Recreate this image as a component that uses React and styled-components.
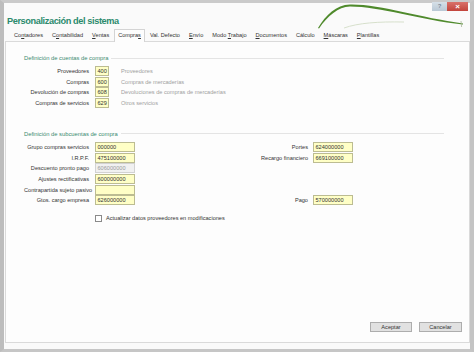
import React from 'react'
import styled, { createGlobalStyle } from 'styled-components'

const tabs = [
    { text: 'Contadores', key: 2 },
    { text: 'Contabilidad', key: 1 },
    { text: 'Ventas', key: 0 },
    { text: 'Compras', key: 6, active: true },
    { text: 'Val. Defecto', key: -1 },
    { text: 'Envío', key: 0 },
    { text: 'Modo Trabajo', key: 5 },
    { text: 'Documentos', key: 0 },
    { text: 'Cálculo', key: -1 },
    { text: 'Máscaras', key: 0 },
    { text: 'Plantillas', key: 0 },
]

const cuentas = [
    { label: 'Proveedores', value: '400', desc: 'Proveedores' },
    { label: 'Compras', value: '600', desc: 'Compras de mercaderías' },
    { label: 'Devolución de compras', value: '608', desc: 'Devoluciones de compras de mercaderías' },
    { label: 'Compras de servicios', value: '629', desc: 'Otros servicios' },
]

const subcuentas = [
    { left: ['Grupo compras servicios', '000000'], right: ['Portes', '624000000'] },
    { left: ['I.R.P.F.', '475100000'], right: ['Recargo financiero', '669100000'] },
    { left: ['Descuento pronto pago', '606000000'], disabled: true },
    { left: ['Ajustes rectificativas', '600000000'] },
    { left: ['Contrapartida sujeto pasivo', ''] },
    { left: ['Gtos. cargo empresa', '626000000'], right: ['Pago', '570000000'] },
]

const TabLabel = ({ text, key: k }) => {
    if (k < 0) return text
    return (
        <>
            {text.slice(0, k)}
            <u>{text[k]}</u>
            {text.slice(k + 1)}
        </>
    )
}

const App = () => {
    return (
        <>
            <GlobalStyle />
            <Window>
                <Header>
                    <Title>Personalización del sistema</Title>
                    <Swoosh viewBox="0 0 170 30" width="170" height="30">
                        <path d="M44,25 C58,20 78,18.5 104,19" fill="none" stroke="#d3dcc6" strokeWidth="0.9" />
                        <path
                            d="M18,25 C26,12 36,2 50,1.6 C80,1 120,15 163,20.4 L163,21.6 C120,17 80,3.6 50,3.6 C38,4 28,13 19,25.4 Z"
                            fill="#4f8a2c"
                        />
                        <path d="M161,18 L161.6,24" stroke="#a9b69b" strokeWidth="0.8" />
                    </Swoosh>
                </Header>
                <Controls>
                    <HelpButton>?</HelpButton>
                    <CloseButton>×</CloseButton>
                </Controls>
                <TabBar>
                    {tabs.map((t) => (
                        <Tab key={t.text} $active={t.active}>
                            {TabLabel({ text: t.text, key: t.key })}
                        </Tab>
                    ))}
                </TabBar>
                <Panel>
                    <Section>
                        <Legend $top={12.5}>
                            <span>Definición de cuentas de compra</span>
                            <Rule />
                        </Legend>
                        <Rows>
                            {cuentas.map((c) => (
                                <Row key={c.label}>
                                    <Label $width={65}>{c.label}</Label>
                                    <Field $width={14}>{c.value}</Field>
                                    <Desc>{c.desc}</Desc>
                                </Row>
                            ))}
                        </Rows>
                    </Section>
                    <Section>
                        <Legend $top={22.4}>
                            <span>Definición de subcuentas de compra</span>
                            <Rule />
                        </Legend>
                        <Grid>
                            {subcuentas.map((r, i) => (
                                <React.Fragment key={i}>
                                    <GridLabel>{r.left[0]}</GridLabel>
                                    <Field $width={40} $disabled={r.disabled}>{r.left[1]}</Field>
                                    <GridLabel $pad={5}>{r.right ? r.right[0] : ''}</GridLabel>
                                    {r.right ? <Field $width={40}>{r.right[1]}</Field> : <span />}
                                </React.Fragment>
                            ))}
                        </Grid>
                        <CheckRow>
                            <Check />
                            <CheckText>Actualizar datos proveedores en modificaciones</CheckText>
                        </CheckRow>
                    </Section>
                    <Buttons>
                        <Button $width={42}>Aceptar</Button>
                        <Button $width={43}>Cancelar</Button>
                    </Buttons>
                </Panel>
            </Window>
        </>
    )
}

export default App

const GlobalStyle = createGlobalStyle`
    html, body {
        margin: 0;
        padding: 0;
        background: #ffffff;
    }
    body {
        font-family: "Liberation Sans", Arial, sans-serif;
        color: #333;
    }
`

const Window = styled.div`
    position: relative;
    box-sizing: border-box;
    width: 474px;
    height: 352px;
    display: flex;
    flex-direction: column;
    background: #fafafa;
    border-top: 3px solid #cacaca;
    border-left: 4px solid #bdbdbd;
    border-right: 4px solid #c4c4c4;
    border-bottom: 3px solid #c6c6c6;
`

const Header = styled.div`
    position: relative;
    height: 26px;
    padding-left: 3px;
`

const Title = styled.div`
    margin-top: 13px;
    font-size: 9.2px;
    line-height: 11px;
    font-weight: bold;
    letter-spacing: -0.4px;
    color: #2b8a6d;
`

const Swoosh = styled.svg`
    position: absolute;
    left: 296px;
    top: 0;
`

const Controls = styled.div`
    position: absolute;
    top: -1px;
    right: 2px;
    display: flex;
    height: 9px;
`

const HelpButton = styled.div`
    width: 15px;
    height: 9px;
    background: linear-gradient(#d6e0e8, #b9c8d5);
    color: #7a8c9b;
    font-size: 6px;
    line-height: 9px;
    text-align: center;
    font-weight: bold;
`

const CloseButton = styled.div`
    width: 21px;
    height: 9px;
    background: linear-gradient(#d9716a, #c2443b);
    color: #fff;
    font-size: 8px;
    line-height: 9px;
    text-align: center;
    font-weight: bold;
`

const TabBar = styled.div`
    display: flex;
    align-items: flex-end;
    height: 12px;
    padding-left: 5.5px;
`

const Tab = styled.div`
    box-sizing: border-box;
    height: ${(p) => (p.$active ? '13px' : '11px')};
    padding: 0 ${(p) => (p.$active ? '3.5px' : '4.5px')};
    line-height: 11px;
    font-size: 5.6px;
    color: #333;
    white-space: nowrap;
    position: relative;
    z-index: 1;
    margin-bottom: ${(p) => (p.$active ? '-1px' : '0')};
    background: ${(p) => (p.$active ? '#fdfdfd' : 'transparent')};
    border: ${(p) => (p.$active ? '1px solid #d4d4d4' : 'none')};
    border-bottom: none;

    u {
        text-decoration-thickness: 0.5px;
    }
`

const Panel = styled.div`
    flex: 1;
    display: flex;
    flex-direction: column;
    margin: 0 0 6px 1px;
    background: #fdfdfd;
    border: 1px solid #dadada;
`

const Section = styled.div`
    margin: 0 25px 0 18px;
`

const Legend = styled.div`
    display: flex;
    align-items: center;
    gap: 3px;
    height: 7px;
    margin-top: ${(p) => p.$top}px;
    font-size: 5.8px;
    color: #3a8a70;
    white-space: nowrap;
`

const Rule = styled.div`
    flex: 1;
    height: 1px;
    background: #e4e4e4;
`

const Rows = styled.div`
    display: flex;
    flex-direction: column;
    gap: 0.7px;
    margin-top: 4.5px;
`

const Row = styled.div`
    display: flex;
    align-items: center;
    height: 10px;
`

const Label = styled.div`
    width: ${(p) => p.$width}px;
    margin-right: 6px;
    text-align: right;
    font-size: 5.6px;
    color: #333;
    white-space: nowrap;
`

const Field = styled.div`
    box-sizing: border-box;
    width: ${(p) => p.$width}px;
    height: 10px;
    padding-left: 1.5px;
    line-height: 8px;
    font-size: 5.6px;
    white-space: nowrap;
    overflow: hidden;
    background: ${(p) => (p.$disabled ? '#f1f1f1' : '#ffffc6')};
    border: 1px solid ${(p) => (p.$disabled ? '#d2d2d2' : '#bcbc92')};
    color: ${(p) => (p.$disabled ? '#9a9a9a' : '#333')};
`

const Desc = styled.div`
    margin-left: 12px;
    font-size: 5.6px;
    color: #a0a0a0;
    white-space: nowrap;
`

const Grid = styled.div`
    display: grid;
    grid-template-columns: 71px 40px 178px 40px;
    grid-auto-rows: 10px;
    row-gap: 0.7px;
    align-items: center;
    margin-top: 4.5px;
`

const GridLabel = styled.div`
    padding-right: ${(p) => p.$pad || 6}px;
    text-align: right;
    font-size: 5.6px;
    color: #333;
    white-space: nowrap;
`

const CheckRow = styled.div`
    display: flex;
    align-items: center;
    margin: 9.5px 0 0 71px;
`

const Check = styled.span`
    box-sizing: border-box;
    width: 7px;
    height: 7px;
    border: 1px solid #8a8a8a;
    background: #fff;
`

const CheckText = styled.span`
    margin-left: 4px;
    font-size: 5.6px;
    color: #333;
`

const Buttons = styled.div`
    margin-top: auto;
    display: flex;
    justify-content: flex-end;
    gap: 7px;
    padding: 0 7px 10px 0;
`

const Button = styled.div`
    box-sizing: border-box;
    width: ${(p) => p.$width}px;
    height: 10px;
    line-height: 8px;
    text-align: center;
    font-size: 5.6px;
    color: #333;
    background: #e1e1e1;
    border: 1px solid #adadad;
`
